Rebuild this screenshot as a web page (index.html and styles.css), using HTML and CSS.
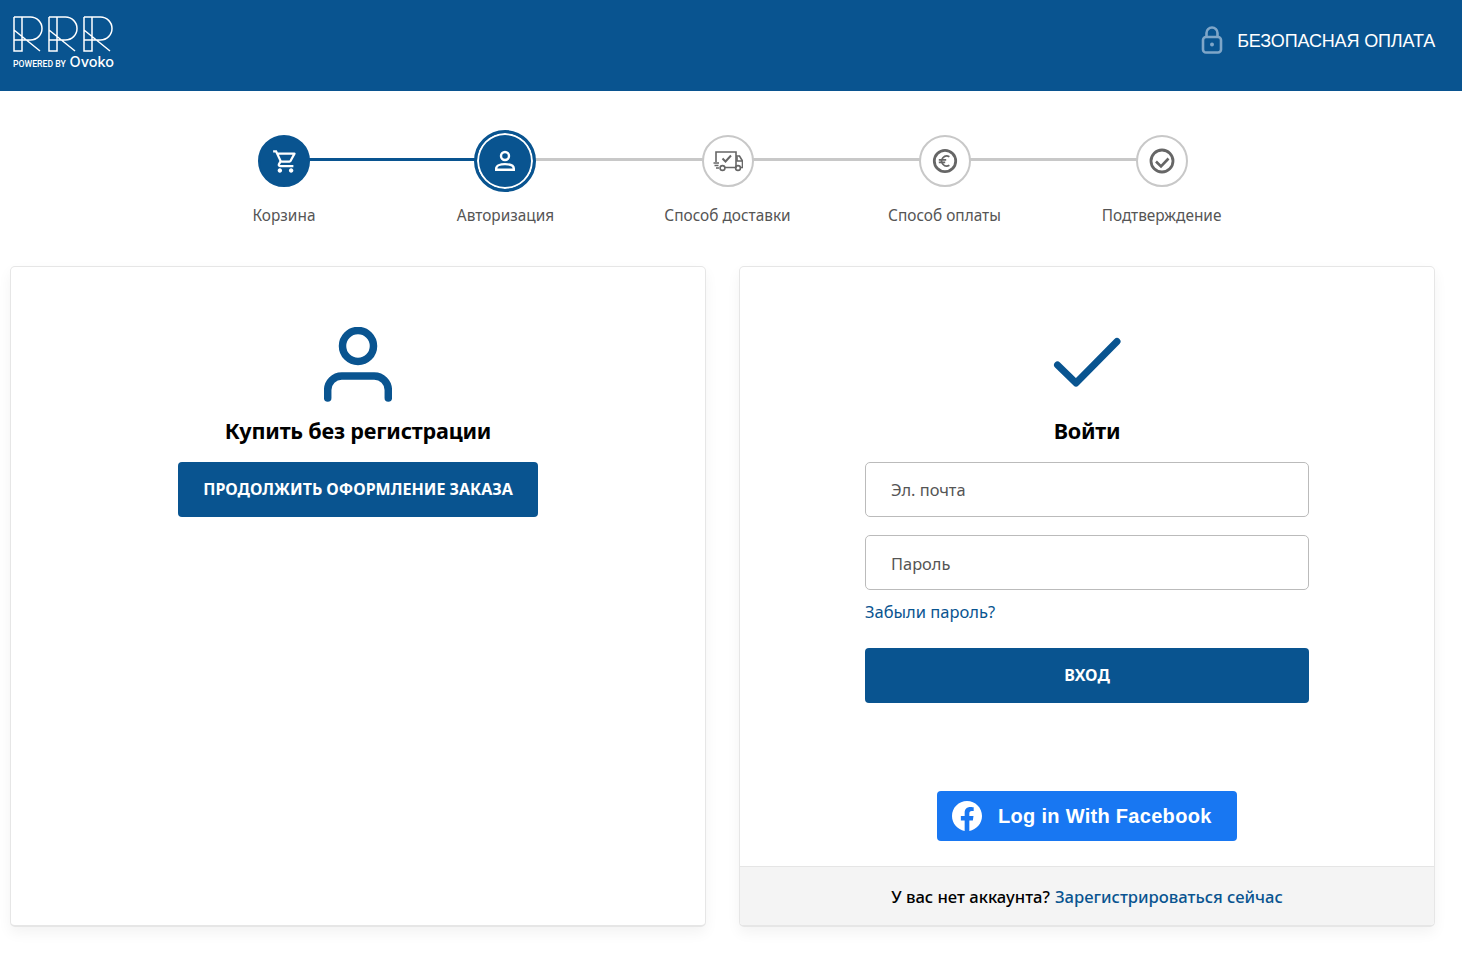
FILE: index.html
```html
<!DOCTYPE html>
<html lang="ru">
<head>
<meta charset="utf-8">
<title>Авторизация</title>
<link rel="stylesheet" href="styles.css">
</head>
<body>
<header class="topbar">
  <div class="logo">
    <svg class="logo-mark" width="102" height="36" viewBox="0 0 102 36" fill="none" stroke="#fff" stroke-width="1.500">
      <path d="M1 1H17.500a11.500 11.500 0 0 1 0 23H1M1 1V35H9V1M1 14L27 35"/>
      <path d="M36 1H52.500a11.500 11.500 0 0 1 0 23H36M36 1V35H44V1M36 14L62 35"/>
      <path d="M71 1H87.500a11.500 11.500 0 0 1 0 23H71M71 1V35H79V1M71 14L97 35"/>
    </svg>
    <div class="logo-sub"><span class="powered">POWERED BY</span><span class="ovoko">Ovoko</span></div>
  </div>
  <div class="secure">
    <svg width="22" height="28" viewBox="0 0 22 28" fill="none" stroke="#7fa6c8" stroke-width="2.600">
      <rect x="2" y="11" width="18" height="15.500" rx="3"/>
      <path d="M5.500 11V7a5.500 5.500 0 0 1 11 0v4"/>
      <circle cx="11" cy="18.500" r="2" fill="#7fa6c8" stroke="none"/>
    </svg>
    <span>БЕЗОПАСНАЯ ОПЛАТА</span>
  </div>
</header>

<ol class="stepper">
  <li class="step step-done">
    <div class="step-slot"><span class="bubble bubble-fill">
      <svg class="cart" width="27" height="27" viewBox="0 0 24 24" fill="#fff"><path d="M15.550 13c.750 0 1.410-.410 1.750-1.030l3.580-6.490A.996.996 0 0 0 20.010 4H5.210l-.940-2H1v2h2l3.600 7.590-1.350 2.440C4.520 15.370 5.480 17 7 17h12v-2H7l1.100-2h7.450zM6.160 6h12.150l-2.760 5H8.530L6.160 6zM7 18c-1.100 0-1.990.9-1.990 2S5.900 22 7 22s2-.9 2-2-.9-2-2-2zm10 0c-1.100 0-1.990.9-1.990 2s.890 2 1.990 2 2-.9 2-2-.9-2-2-2z"/></svg>
    </span></div>
    <span class="step-label">Корзина</span>
  </li>
  <li class="step step-current">
    <div class="step-slot"><span class="bubble bubble-fill bubble-ring">
      <svg width="24" height="24" viewBox="0 0 24 24" fill="none" stroke="#fff" stroke-width="2.400"><circle cx="12" cy="7" r="4"/><path d="M3.200 20.800v-1.200c0-3 4-4.500 8.800-4.500s8.800 1.500 8.800 4.500v1.200z"/></svg>
    </span></div>
    <span class="step-label">Авторизация</span>
  </li>
  <li class="step">
    <div class="step-slot"><span class="bubble">
      <svg width="30" height="22" viewBox="0 0 30 22" fill="none" stroke="#666" stroke-width="1.600"><path d="M3 12V2h20v15.500H12M23 6h3.500l3 5v6.500h-2"/><path d="M23 17.500h-0.500M24 6.500v4.500h5"/><circle cx="9.500" cy="18" r="2.400"/><circle cx="25" cy="18" r="2.400"/><path d="M0.500 13h5.500M1.500 15.500h4M3 18h3"/><path d="M9.500 8.500l3 3 5.500-6" stroke-width="2"/></svg>
    </span></div>
    <span class="step-label">Способ доставки</span>
  </li>
  <li class="step">
    <div class="step-slot"><span class="bubble">
      <svg width="28" height="28" viewBox="0 0 28 28" fill="none" stroke="#666" stroke-width="2.800"><circle cx="14" cy="14" r="10.700"/><path d="M18.400 9.800a5 5 0 1 0 0 8.400M7.800 12.800h7.400M7.800 15.300h6.400" stroke-width="1.700"/></svg>
    </span></div>
    <span class="step-label">Способ оплаты</span>
  </li>
  <li class="step">
    <div class="step-slot"><span class="bubble">
      <svg width="28" height="28" viewBox="0 0 28 28" fill="none" stroke="#666" stroke-width="2.800"><circle cx="14" cy="14" r="11"/><path d="M8 14.500l5 5 7.500-8" stroke-width="2.600"/></svg>
    </span></div>
    <span class="step-label">Подтверждение</span>
  </li>
</ol>

<main class="cards">
  <section class="card">
    <div class="card-body">
      <svg class="card-icon" width="68" height="75" viewBox="0 0 68 75" fill="none" stroke="#095490" stroke-width="7.500" stroke-linecap="round"><circle cx="34" cy="19" r="15.500"/><path d="M3.700 71V63a14 14 0 0 1 14-14H50.300a14 14 0 0 1 14 14v8"/></svg>
      <h2 class="card-title">Купить без регистрации</h2>
      <a class="btn btn-guest" href="#">ПРОДОЛЖИТЬ ОФОРМЛЕНИЕ ЗАКАЗА</a>
    </div>
  </section>

  <section class="card">
    <div class="card-body">
      <svg class="card-icon" width="68" height="75" viewBox="0 0 68 75" fill="none" stroke="#095490" stroke-width="7" stroke-linecap="round" stroke-linejoin="round"><path d="M4.500 38L23 56L64 14.500"/></svg>
      <h2 class="card-title">Войти</h2>
      <form class="login-form">
        <input class="field" type="text" placeholder="Эл. почта">
        <input class="field field-next" type="password" placeholder="Пароль">
        <a class="forgot" href="#">Забыли пароль?</a>
        <a class="btn btn-login" href="#">ВХОД</a>
      </form>
      <a class="fb" href="#">
        <svg width="30" height="30" viewBox="0 0 24 24" fill="#fff"><path d="M24 12.073c0-6.627-5.373-12-12-12s-12 5.373-12 12c0 5.990 4.388 10.954 10.125 11.854v-8.385H7.078v-3.470h3.047V9.430c0-3.007 1.792-4.669 4.533-4.669 1.312 0 2.686.235 2.686.235v2.953H15.830c-1.491 0-1.956.925-1.956 1.874v2.250h3.328l-.532 3.470h-2.796v8.385C19.612 23.027 24 18.062 24 12.073z"/></svg>
        <span>Log in With Facebook</span>
      </a>
    </div>
    <footer class="card-foot">У вас нет аккаунта? <a href="#">Зарегистрироваться сейчас</a></footer>
  </section>
</main>
</body>
</html>
```
FILE: styles.css
```css
* { box-sizing: border-box; }
html, body { margin: 0; padding: 0; background: #fff; }
body { font-family: "Noto Sans", "Open Sans", sans-serif; color: #000; }
a { text-decoration: none; }

.topbar {
  height: 91px;
  background: #095490;
  display: flex;
  justify-content: space-between;
  align-items: flex-start;
  padding: 16px 27px 0 13px;
}
.logo { display: flex; flex-direction: column; width: 101px; }
.logo-mark { display: block; }
.logo-sub { display: flex; justify-content: space-between; align-items: baseline; margin-top: 1px; height: 20px; color: #fff; }
.powered { font-family: "Roboto", sans-serif; font-size: 8.700px; font-weight: 500; letter-spacing: 0; white-space: nowrap; }
.ovoko { font-family: "Inter", sans-serif; font-size: 14.500px; font-weight: 500; }

.secure { display: flex; align-items: center; gap: 14px; margin-top: 10px; color: #fff; font-family: "Liberation Sans", Arial, sans-serif; font-size: 18px; letter-spacing: -0.15px; }
.secure span { position: relative; top: 1px; }
.secure svg { display: block; }

.stepper {
  list-style: none;
  margin: 39px 0 0 173px;
  padding: 0;
  width: 1100px;
  display: grid;
  grid-template-columns: 222px 221px 223px 211px 223px;
}
.step { position: relative; display: flex; flex-direction: column; align-items: center; }
.step:not(:last-child)::after {
  content: "";
  position: absolute;
  left: 50%;
  top: 28px;
  width: 100%;
  height: 3px;
  background: #c8c8c8;
}
.step-done::after { background: #095490 !important; }
.step-slot { height: 62px; display: flex; align-items: center; justify-content: center; position: relative; z-index: 1; }
.step-current .step-slot { margin-right: 1px; }
.bubble {
  width: 52px; height: 52px;
  border-radius: 50%;
  border: 2px solid #c8c8c8;
  background: #fff;
  display: flex; align-items: center; justify-content: center;
}
.bubble-fill { background: #095490; border-color: #095490; }
.bubble-ring {
  width: 62px; height: 62px;
  border: 3px solid #095490;
  box-shadow: inset 0 0 0 2px #fff;
}
.cart { margin-left: 2px; }
.step-label { margin-top: 14px; font-size: 15.400px; line-height: 20px; color: #555; white-space: nowrap; }

.cards {
  display: grid;
  grid-template-columns: 696px 696px;
  column-gap: 33px;
  margin: 40px 0 0 10px;
  padding-bottom: 40px;
}
.card {
  height: 661px;
  border: 1px solid #e6e6e6;
  border-bottom-width: 2px;
  border-radius: 5px;
  background: #fff;
  box-shadow: 0 6px 14px rgba(0, 0, 0, 0.05);
  display: flex;
  flex-direction: column;
  overflow: hidden;
}
.card-body { flex: 1; display: flex; flex-direction: column; align-items: center; padding-top: 60px; }
.card-icon { display: block; }
.card-title { margin: 14px 0 16px; font-size: 21.600px; line-height: 30px; font-weight: 700; letter-spacing: -0.2px; color: #000; }

.btn {
  display: flex; align-items: center; justify-content: center;
  height: 55px;
  padding-bottom: 2px;
  border-radius: 4px;
  background: #095490;
  color: #fff;
  font-size: 16px;
  font-weight: 700;
}
.btn-guest { width: 360px; }
.login-form { width: 444px; display: flex; flex-direction: column; }
.field {
  height: 55px;
  width: 100%;
  border: 1px solid #bbb;
  border-radius: 5px;
  padding: 0 25px;
  font: 16.400px "Noto Sans", "Open Sans", sans-serif;
  color: #555;
  background: #fff;
}
.field::placeholder { color: #555; opacity: 1; }
.field-next { margin-top: 18px; padding-top: 1px; }
.forgot { margin-top: 10px; font-size: 16.500px; line-height: 24px; color: #095490; }
.btn-login { margin-top: 24px; }

.fb {
  margin-top: 88px;
  width: 300px; height: 50px;
  border-radius: 4px;
  background: #1877f2;
  display: flex; align-items: center; gap: 16px;
  padding-left: 15px;
  color: #fff;
  font-family: "Liberation Sans", Arial, sans-serif;
  font-size: 20px;
  font-weight: 700;
  letter-spacing: 0.3px;
}
.fb svg { display: block; flex: none; }

.card-foot {
  height: 59px;
  flex: none;
  background: #f4f4f4;
  border-top: 1px solid #e5e5e5;
  display: flex; align-items: center; justify-content: center; gap: 5px;
  font-size: 16.600px;
  font-weight: 500;
  color: #000;
}
.card-foot a { color: #095490; }
```
